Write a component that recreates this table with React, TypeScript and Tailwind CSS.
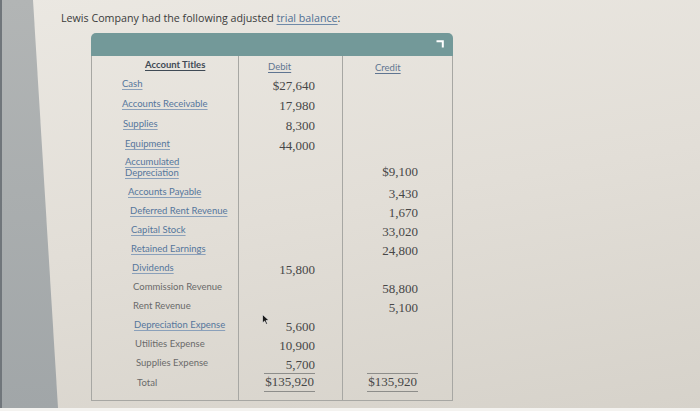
import React from "react";

type Row = {
  label: string[];
  link: boolean;
  debit?: string;
  credit?: string;
  pl: string;
  h: string;
  kind?: "two" | "total";
};

const rows: Row[] = [
  { label: ["Cash"], link: true, debit: "$27,640", pl: "pl-[30px]", h: "h-[20px]" },
  { label: ["Accounts Receivable"], link: true, debit: "17,980", pl: "pl-[30px]", h: "h-[20px]" },
  { label: ["Supplies"], link: true, debit: "8,300", pl: "pl-[31px]", h: "h-[20px]" },
  { label: ["Equipment"], link: true, debit: "44,000", pl: "pl-[33px]", h: "h-[20px]" },
  { label: ["Accumulated", "Depreciation"], link: true, credit: "$9,100", pl: "pl-[33px]", h: "h-[29px]", kind: "two" },
  { label: ["Accounts Payable"], link: true, credit: "3,430", pl: "pl-[36px]", h: "h-[19px]" },
  { label: ["Deferred Rent Revenue"], link: true, credit: "1,670", pl: "pl-[38px]", h: "h-[19px]" },
  { label: ["Capital Stock"], link: true, credit: "33,020", pl: "pl-[39px]", h: "h-[19px]" },
  { label: ["Retained Earnings"], link: true, credit: "24,800", pl: "pl-[39px]", h: "h-[19px]" },
  { label: ["Dividends"], link: true, debit: "15,800", pl: "pl-[40px]", h: "h-[19px]" },
  { label: ["Commission Revenue"], link: false, credit: "58,800", pl: "pl-[41px]", h: "h-[19px]" },
  { label: ["Rent Revenue"], link: false, credit: "5,100", pl: "pl-[41px]", h: "h-[19px]" },
  { label: ["Depreciation Expense"], link: true, debit: "5,600", pl: "pl-[42px]", h: "h-[19px]" },
  { label: ["Utilities Expense"], link: false, debit: "10,900", pl: "pl-[43px]", h: "h-[19px]" },
  { label: ["Supplies Expense"], link: false, debit: "5,700", pl: "pl-[44px]", h: "h-[19px]" },
  { label: ["Total"], link: false, debit: "$135,920", credit: "$135,920", pl: "pl-[45px]", h: "h-[20px]", kind: "total" },
];

const labelLink = "text-[#55769c] underline decoration-[#8aa0ba] underline-offset-2";
const labelPlain = "text-[#6a6a6a]";
const num = "font-['Liberation_Serif',serif] text-[13px] leading-[16px] text-[#474747]";

function Label({ r }: { r: Row }) {
  const cls = r.link ? labelLink : labelPlain;
  if (r.kind === "two") {
    return (
      <div className={`flex flex-col pt-[2px] leading-[11px] ${cls}`}>
        {r.label.map((l) => (
          <span key={l}>{l}</span>
        ))}
      </div>
    );
  }
  return <span className={cls}>{r.label[0]}</span>;
}

function Num({ v, total }: { v?: string; total?: boolean }) {
  if (!v) return null;
  if (total) {
    return (
      <span className={`${num} border-t border-b border-[#8d8d8a] px-[1px] pb-[1px]`}>{v}</span>
    );
  }
  return <span className={num}>{v}</span>;
}

export default function App() {
  return (
    <div className="w-[700px] h-[411px] overflow-hidden flex flex-col bg-[linear-gradient(170deg,#ebe8e2_0%,#e2ded7_50%,#d6d2ca_100%)]">
      <div className="flex-1 flex min-h-0">
        <div className="w-[58px] shrink-0 bg-[linear-gradient(180deg,#b2b5b5,#a1a6a8)] [clip-path:polygon(0_0,33px_0,100%_100%,0_100%)] border-l-[2px] border-[#70767b]" />
        <div className="flex flex-col pt-[9px]">
          <p className="ml-[3px] font-['Open_Sans',sans-serif] text-[10.7px] leading-[18px] text-[#3b3b3b]">
            Lewis Company had the following adjusted{" "}
            <span className="text-[#4f6f94] underline decoration-[#6f8aa8] underline-offset-2">trial balance</span>:
          </p>
          <div className="relative ml-[33px] mt-[6px] w-[362px] font-[Lato,sans-serif] text-[9.5px]">
            <div className="h-[23px] rounded-t-[5px] bg-[#739999] flex items-center justify-end pr-[9px]">
              <svg width="8" height="8" viewBox="0 0 8 8" className="mt-[-2px]">
                <path d="M0.5 1.2 H6.8 V7.5" stroke="#ffffff" strokeWidth="2" fill="none" />
              </svg>
            </div>
            <div className="border-x border-b border-[#a7a7a3] flex flex-col">
              <div className="flex h-[18px]">
                <div className="w-[147px] border-r border-[#a7a7a3] pl-[53px] pt-[2px]">
                  <span className="font-bold text-[#3f4a55] underline underline-offset-2">Account Titles</span>
                </div>
                <div className="w-[104px] border-r border-[#a7a7a3] pl-[29px] pt-[4px]">
                  <span className="text-[#5f7591] underline underline-offset-2">Debit</span>
                </div>
                <div className="flex-1 pl-[32px] pt-[5px]">
                  <span className="text-[#5f7591] underline underline-offset-2">Credit</span>
                </div>
              </div>
              {rows.map((r) => {
                const align = r.kind === "two" ? "items-end pb-[3px]" : r.kind === "total" ? "items-start" : "items-center pt-[3px]";
                return (
                  <div key={r.label.join(" ")} className={`flex ${r.h}`}>
                    <div className={`w-[147px] border-r border-[#a7a7a3] flex ${r.kind === "two" ? "items-start" : "items-center"} ${r.pl}`}>
                      <Label r={r} />
                    </div>
                    <div className={`w-[104px] border-r border-[#a7a7a3] flex justify-end pr-[27px] ${align}`}>
                      <Num v={r.debit} total={r.kind === "total"} />
                    </div>
                    <div className={`flex-1 flex justify-end pr-[34px] ${align}`}>
                      <Num v={r.credit} total={r.kind === "total"} />
                    </div>
                  </div>
                );
              })}
              <div className="flex h-[7px]">
                <div className="w-[147px] border-r border-[#a7a7a3]" />
                <div className="w-[104px] border-r border-[#a7a7a3]" />
                <div className="flex-1" />
              </div>
            </div>
            <svg className="absolute left-[171px] top-[281px]" width="8" height="11" viewBox="0 0 8 11">
              <path d="M0.5 0.5 L0.5 9 L2.6 7 L4.2 10.3 L5.5 9.7 L4 6.5 L7 6.5 Z" fill="#1a1a1a" stroke="#f5f5f5" strokeWidth="0.6" />
            </svg>
          </div>
        </div>
      </div>
      <div className="h-[3px] bg-[#f4f3f0]" />
    </div>
  );
}
